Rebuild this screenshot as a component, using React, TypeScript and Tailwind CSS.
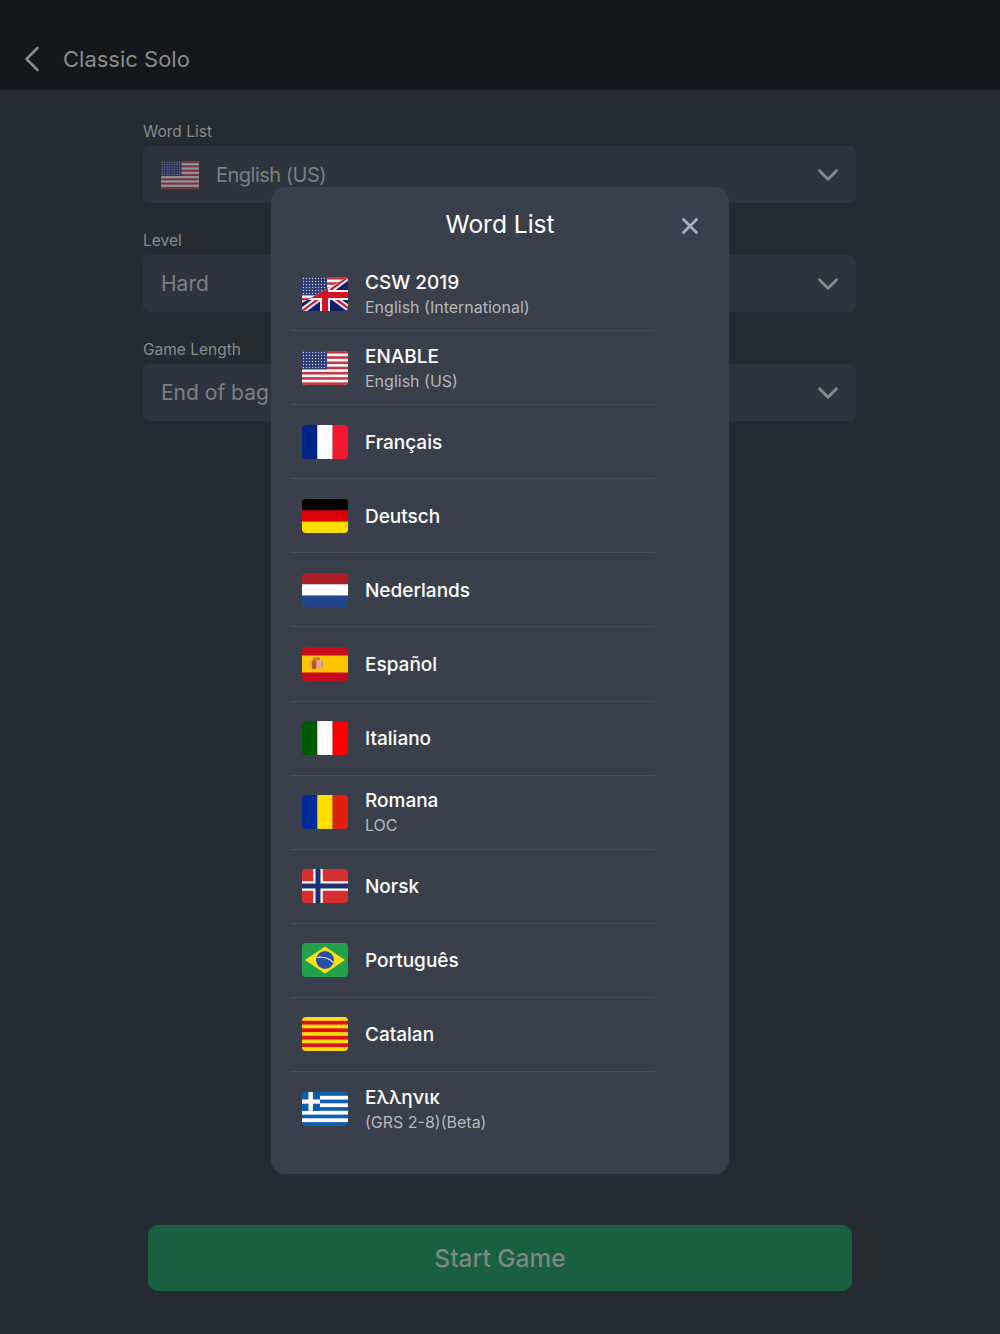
import React from "react";
import { ChevronDown, ChevronLeft, X } from "lucide-react";

const font = "font-['Inter','Noto_Sans',sans-serif]";

function UsFlag() {
  return (
    <svg viewBox="0 0 46 34" className="block w-full h-full">
      <defs>
        <pattern id="stars" width="3" height="3" patternUnits="userSpaceOnUse">
          <rect width="3" height="3" fill="#2b3a74" />
          <circle cx="1.5" cy="1.5" r="0.7" fill="#c9cfe0" />
        </pattern>
      </defs>
      <rect width="46" height="34" fill="#f4f4f4" />
      {[0, 1, 2, 3, 4, 5, 6].map((i) => (
        <rect key={i} y={i * 5.23} width="46" height="2.6" fill="#bf3a45" />
      ))}
      <rect width="25" height="18.3" fill="url(#stars)" />
    </svg>
  );
}

function UkFlag() {
  return (
    <svg viewBox="0 0 46 34" className="block w-full h-full">
      <defs>
        <pattern id="stars2" width="3" height="3" patternUnits="userSpaceOnUse">
          <rect width="3" height="3" fill="#2b3a74" />
          <circle cx="1.5" cy="1.5" r="0.7" fill="#c9cfe0" />
        </pattern>
        <clipPath id="ukHalf">
          <path d="M46 0V34H0V26Z" />
        </clipPath>
      </defs>
      <rect width="46" height="34" fill="#f4f4f4" />
      {[0, 1, 2, 3, 4, 5, 6].map((i) => (
        <rect key={i} y={i * 5.23} width="46" height="2.6" fill="#bf3a45" />
      ))}
      <rect width="25" height="18.3" fill="url(#stars2)" />
      <g clipPath="url(#ukHalf)">
        <rect width="46" height="34" fill="#12206b" />
        <path d="M4 0L46 31M46 0L0 34" stroke="#f4f4f4" strokeWidth="6" />
        <path d="M4 0L46 31M46 0L0 34" stroke="#d2132a" strokeWidth="2.2" />
        <path d="M23 0V34M0 18H46" stroke="#f4f4f4" strokeWidth="10" />
        <path d="M23 0V34M0 18H46" stroke="#d2132a" strokeWidth="6" />
      </g>
    </svg>
  );
}

function Tricolor({ a, b, c }: { a: string; b: string; c: string }) {
  return (
    <svg viewBox="0 0 46 34" className="block w-full h-full">
      <rect width="15.4" height="34" fill={a} />
      <rect x="15.3" width="15.4" height="34" fill={b} />
      <rect x="30.6" width="15.4" height="34" fill={c} />
    </svg>
  );
}

function Bands({ a, b, c }: { a: string; b: string; c: string }) {
  return (
    <svg viewBox="0 0 46 34" className="block w-full h-full">
      <rect width="46" height="11.4" fill={a} />
      <rect y="11.3" width="46" height="11.4" fill={b} />
      <rect y="22.6" width="46" height="11.4" fill={c} />
    </svg>
  );
}

function SpainFlag() {
  return (
    <svg viewBox="0 0 46 34" className="block w-full h-full">
      <rect width="46" height="34" fill="#c60b1e" />
      <rect y="8.5" width="46" height="17" fill="#ffc400" />
      <rect x="10" y="13" width="4.5" height="9" rx="1.5" fill="#c0501f" />
      <rect x="14.5" y="13" width="4.5" height="9" rx="1.5" fill="#d9a3a0" />
      <rect x="11" y="10.5" width="7" height="2.5" rx="1" fill="#b8762a" />
      <rect x="8" y="13.5" width="1.5" height="8" fill="#c09a5a" />
      <rect x="19.5" y="13.5" width="1.5" height="8" fill="#c09a5a" />
    </svg>
  );
}

function NorwayFlag() {
  return (
    <svg viewBox="0 0 46 34" className="block w-full h-full">
      <rect width="46" height="34" fill="#d62f31" />
      <path d="M16 0V34M0 17H46" stroke="#fff" strokeWidth="9.5" />
      <path d="M16 0V34M0 17H46" stroke="#1f2f76" strokeWidth="5" />
    </svg>
  );
}

function BrazilFlag() {
  return (
    <svg viewBox="0 0 46 34" className="block w-full h-full">
      <rect width="46" height="34" fill="#21a24a" />
      <path d="M23 3.5L43 17L23 30.5L3 17Z" fill="#fbe114" />
      <circle cx="23" cy="17" r="9" fill="#2a4ea3" />
      <path d="M14.6 14.5C20 13.5 27 15 31.5 19.5" fill="none" stroke="#d7deee" strokeWidth="1.2" />
    </svg>
  );
}

function CatalanFlag() {
  return (
    <svg viewBox="0 0 46 34" className="block w-full h-full">
      <rect width="46" height="34" fill="#fcdd09" />
      {[3.8, 11.3, 18.8, 26.3].map((y) => (
        <rect key={y} y={y} width="46" height="3.8" fill="#da121a" />
      ))}
    </svg>
  );
}

function GreeceFlag() {
  return (
    <svg viewBox="0 0 46 34" className="block w-full h-full">
      <rect width="46" height="34" fill="#0d5eaf" />
      {[3.8, 11.3, 18.8, 26.3].map((y) => (
        <rect key={y} y={y} width="46" height="3.8" fill="#fff" />
      ))}
      <rect width="18" height="18.8" fill="#0d5eaf" />
      <rect x="6.5" width="4.4" height="18.8" fill="#fff" />
      <rect y="7.5" width="18" height="4.2" fill="#fff" />
    </svg>
  );
}

const rows: { title: string; sub?: string; flag: React.ReactNode }[] = [
  { title: "CSW 2019", sub: "English (International)", flag: <UkFlag /> },
  { title: "ENABLE", sub: "English (US)", flag: <UsFlag /> },
  { title: "Français", flag: <Tricolor a="#002488" b="#ffffff" c="#f31830" /> },
  { title: "Deutsch", flag: <Bands a="#000000" b="#dd0000" c="#ffdd00" /> },
  { title: "Nederlands", flag: <Bands a="#ae1c28" b="#ffffff" c="#21468b" /> },
  { title: "Español", flag: <SpainFlag /> },
  { title: "Italiano", flag: <Tricolor a="#005a00" b="#ffffff" c="#ff0000" /> },
  { title: "Romana", sub: "LOC", flag: <Tricolor a="#002b9b" b="#ffdd00" c="#e0200f" /> },
  { title: "Norsk", flag: <NorwayFlag /> },
  { title: "Português", flag: <BrazilFlag /> },
  { title: "Catalan", flag: <CatalanFlag /> },
  { title: "Ελληνικ", sub: "(GRS 2-8)(Beta)", flag: <GreeceFlag /> },
];

function Select({ label, value, flag }: { label: string; value: string; flag?: boolean }) {
  return (
    <div>
      <div className="text-[15.5px] leading-[20px] h-[18px] mb-[6px] text-[#8a8a8a]">{label}</div>
      <div className="h-[57px] rounded-[6px] bg-[#2e343e] flex items-center pl-[18px] pr-[11px]">
        {flag && (
          <div className="w-[38px] h-[28px] mr-[17px] rounded-[2px] overflow-hidden opacity-50">
            <UsFlag />
          </div>
        )}
        <span className={`flex-1 text-[#7d7f82] ${flag ? "text-[20px] tracking-[-0.5px]" : "text-[21px]"}`}>{value}</span>
        <ChevronDown className="w-[34px] h-[34px] text-[#8a8a8a]" strokeWidth={2} />
      </div>
    </div>
  );
}

export default function App() {
  return (
    <div className={`relative h-[1334px] bg-[#252b33] flex flex-col ${font}`}>
      <header className="h-[90px] bg-[#14171c] flex items-center pt-[28px] pl-[10px]">
        <ChevronLeft className="w-[44px] h-[44px] text-[#8a8a8a]" strokeWidth={1.4} />
        <span className="ml-[9px] text-[22px] leading-[30px] text-[#8a8a8a]">Classic Solo</span>
      </header>

      <div className="ml-[143px] mr-[144px] mt-[32px] flex flex-col gap-[28px]">
        <Select label="Word List" value="English (US)" flag />
        <Select label="Level" value="Hard" />
        <Select label="Game Length" value="End of bag" />
      </div>

      <button className="mt-auto mb-[43px] mx-[148px] h-[66px] rounded-[10px] bg-[#186040] text-[24.5px] font-medium text-[#7f8582]">
        Start Game
      </button>

      {/* Word list modal */}
      <div className="absolute left-[271px] top-[187px] w-[458px] h-[987px] rounded-[14px] bg-[#393f4b] text-white">
        <div className="relative h-[70px] flex items-center justify-center">
          <span className="text-[24.5px] mt-[4px]">Word List</span>
          <X className="absolute right-[26px] top-[26px] w-[26px] h-[26px] text-[#9fb0c6]" strokeWidth={2.6} />
        </div>
        <div className="ml-[20px] w-[364px]">
          {rows.map((row, i) => (
            <div
              key={row.title}
              className={`h-[74.1px] flex items-center pl-[11px] ${i < rows.length - 1 ? "border-b border-[#4a505b]" : ""}`}
            >
              <div className="w-[46px] h-[34px] rounded-[4px] overflow-hidden shrink-0">{row.flag}</div>
              <div className="ml-[17px] pt-[2px]">
                <div className="text-[19px] leading-[24px] font-medium">{row.title}</div>
                {row.sub && <div className="text-[16px] leading-[24px] text-[#b4b7bc]">{row.sub}</div>}
              </div>
            </div>
          ))}
        </div>
      </div>
    </div>
  );
}
